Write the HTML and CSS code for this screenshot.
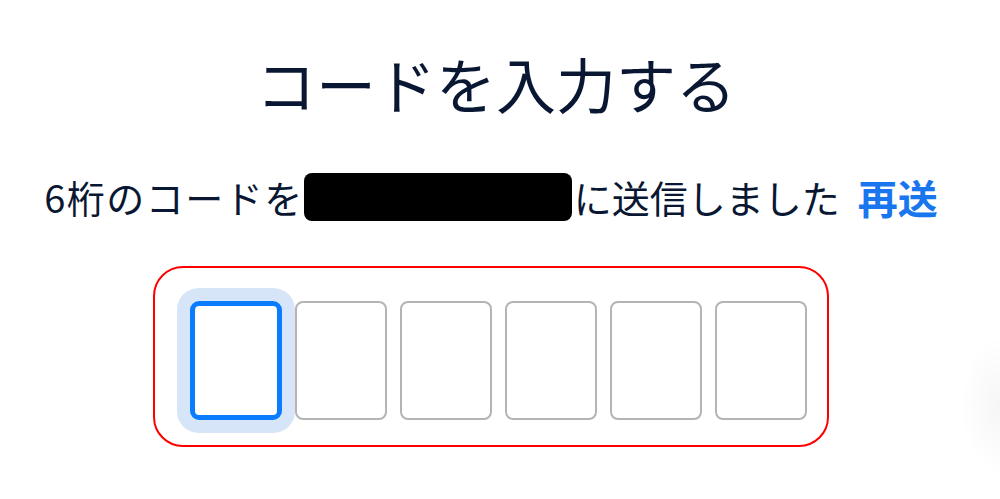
FILE: index.html
```html
<!DOCTYPE html>
<html lang="ja">
<head>
<meta charset="utf-8">
<title>コードを入力する</title>
<link rel="stylesheet" href="styles.css">
</head>
<body>
<main class="page">
  <h1 class="title">コードを入力する</h1>
  <p class="subtitle"><span class="lead">6桁のコードを</span><span class="redact"></span><span class="tail">に送信しました</span><a class="resend" href="#">再送</a></p>
  <div class="otp-frame">
    <div class="otp">
      <div class="digit is-focused"></div>
      <div class="digit"></div>
      <div class="digit"></div>
      <div class="digit"></div>
      <div class="digit"></div>
      <div class="digit"></div>
    </div>
  </div>
</main>
<div class="edge-shadow"></div>
</body>
</html>
```

FILE: styles.css
```css
html, body {
  margin: 0;
  padding: 0;
  background: #ffffff;
  overflow: hidden;
}
body {
  width: 1000px;
  height: 499px;
  position: relative;
  font-family: "Noto Sans CJK JP", "Noto Sans", sans-serif;
  color: #0a1733;
}
.page {
  display: flex;
  flex-direction: column;
  align-items: center;
  padding: 0 18px 0 0;
}
.title {
  margin: 41px 0 0 10px;
  font-size: 60px;
  font-weight: 400;
  line-height: 84px;
  letter-spacing: 0;
}
.subtitle {
  margin: 47px 0 0 0;
  display: flex;
  align-items: center;
  font-size: 38px;
  line-height: 50px;
}
.lead {
  letter-spacing: 1.5px;
}
.redact {
  display: inline-block;
  width: 268px;
  height: 48px;
  margin: 0 2px 0 0;
  background: #000;
  border-radius: 8px;
}
.tail {
  letter-spacing: 0;
}
.resend {
  margin-left: 18px;
  font-size: 40px;
  color: #1a76ee;
  font-weight: 700;
  text-decoration: none;
}
.otp-frame {
  margin-top: 44px;
  width: 676px;
  height: 181px;
  box-sizing: border-box;
  border: 2px solid #ff0000;
  border-radius: 30px;
  padding: 33px 20px 25px 35px;
}
.otp {
  display: flex;
  gap: 13px;
}
.digit {
  width: 92px;
  height: 119px;
  box-sizing: border-box;
  border: 2px solid #b4b4b4;
  border-radius: 8px;
  background: #fff;
}
.digit.is-focused {
  border: 5px solid #0a7cff;
  border-radius: 9px;
  box-shadow: 0 0 0 13px #d6e6f8;
}
.edge-shadow {
  position: absolute;
  right: 0;
  top: 330px;
  width: 40px;
  height: 150px;
  background: radial-gradient(ellipse 40px 70px at 100% 50%, rgba(0, 0, 0, 0.035), rgba(0, 0, 0, 0) 100%);
}
```
